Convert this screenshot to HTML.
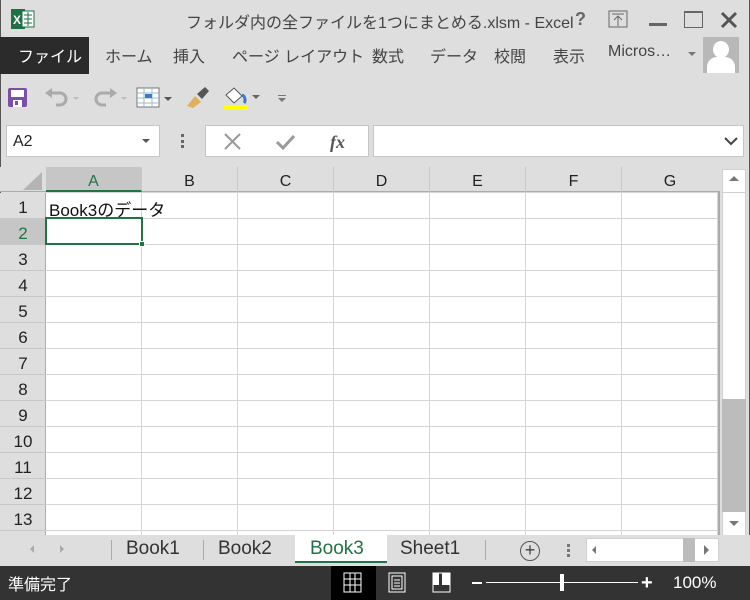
<!DOCTYPE html>
<html><head><meta charset="utf-8"><style>
*{margin:0;padding:0;box-sizing:border-box}
body{width:750px;height:600px;overflow:hidden;background:#dedede;font-family:"Liberation Sans","Noto Sans CJK JP",sans-serif;position:relative;color:#444}
.a{position:absolute}
.tab{position:absolute;top:43px;font-size:16px;color:#444}
.col{position:absolute;top:167px;height:25px;font-size:16px;color:#222;text-align:center;line-height:29px;border-right:1px solid #c8c8c8}
.rh{position:absolute;left:0;width:46px;height:26px;font-size:17px;text-align:center;color:#222;line-height:29px;border-bottom:1px solid #c8c8c8}
</style></head><body>
<div class="a" style="left:0;top:0;width:1px;height:566px;background:#555"></div>
<div class="a" style="right:0;top:0;width:1px;height:566px;background:#555"></div>
<svg class="a" style="left:11px;top:9px" width="25" height="20"><rect x="0" y="0" width="14" height="20" fill="#1e7145"/><rect x="11" y="2" width="12" height="16" fill="#fff" stroke="#1e7145"/><path d="M13 6h8M13 10h8M13 14h8M17 3v14" stroke="#1e7145"/><text x="2" y="15" font-size="12" font-weight="bold" fill="#fff" font-family="Liberation Sans">X</text></svg>
<div class="a" style="left:186px;top:9px;font-size:16px;color:#444">フォルダ内の全ファイルを1つにまとめる.xlsm - Excel</div>
<div class="a" style="left:575px;top:9px;font-size:18px;color:#666;font-weight:bold">?</div>
<svg class="a" style="left:608px;top:10px" width="20" height="18"><rect x="1" y="1" width="18" height="16" fill="none" stroke="#666"/><path d="M4 4h12M10 16V7M6 10l4-4 4 4" stroke="#666" fill="none"/></svg>
<div class="a" style="left:649px;top:23px;width:18px;height:3px;background:#666"></div>
<div class="a" style="left:684px;top:11px;width:19px;height:17px;border:1px solid #666;border-top-width:2px"></div>
<svg class="a" style="left:720px;top:11px" width="18" height="18"><path d="M2 2l14 14M16 2L2 16" stroke="#555" stroke-width="3"/></svg>
<div class="a" style="left:0;top:37px;width:89px;height:37px;background:#2b2b2b"></div>
<div class="tab" style="left:18px;color:#fff">ファイル</div>
<div class="tab" style="left:105px">ホーム</div>
<div class="tab" style="left:173px">挿入</div>
<div class="tab" style="left:232px">ページ レイアウト</div>
<div class="tab" style="left:372px">数式</div>
<div class="tab" style="left:430px">データ</div>
<div class="tab" style="left:494px">校閲</div>
<div class="tab" style="left:553px">表示</div>
<div class="tab" style="left:608px">Micros…</div>
<div class="a" style="left:688px;top:52px;border:4px solid transparent;border-top:4px solid #777"></div>
<div class="a" style="left:703px;top:37px;width:36px;height:36px;background:#b8b8b8;overflow:hidden"><div class="a" style="left:10px;top:4px;width:16px;height:17px;border-radius:50%;background:#fff"></div><div class="a" style="left:4px;top:20px;width:28px;height:20px;border-radius:10px 10px 0 0;background:#fff"></div></div>
<svg class="a" style="left:8px;top:88px" width="20" height="20"><rect x="0" y="0" width="19" height="19" rx="2" fill="#7b4fa8"/><rect x="3" y="2" width="13" height="7" fill="#fff"/><rect x="5" y="12" width="9" height="7" fill="#fff"/><rect x="7" y="13" width="3" height="4" fill="#7b4fa8"/></svg>
<svg class="a" style="left:44px;top:88px" width="35" height="20"><path d="M6 5h10a6 6 0 010 12h-4" stroke="#aaa" stroke-width="3" fill="none"/><path d="M1 5l7-5v10z" fill="#aaa"/><path d="M29 9l3 3 3-3z" fill="#bbb"/></svg>
<svg class="a" style="left:92px;top:88px" width="35" height="20"><path d="M20 5H10a6 6 0 000 12h4" stroke="#aaa" stroke-width="3" fill="none"/><path d="M25 5l-7-5v10z" fill="#aaa"/><path d="M29 9l3 3 3-3z" fill="#bbb"/></svg>
<svg class="a" style="left:136px;top:87px" width="36" height="22"><rect x="1" y="1" width="22" height="19" fill="#fff" stroke="#777"/><path d="M1 6h22M1 11h22M1 16h22M8 1v19M16 1v19" stroke="#9bc"/><rect x="9" y="7" width="7" height="4" fill="#3a7bc8"/><path d="M28 10l4 4 4-4z" fill="#555"/></svg>
<svg class="a" style="left:185px;top:86px" width="26" height="24"><path d="M2 20l8-10 6 6-8 6z" fill="#e0b060"/><path d="M12 8l8-7 4 4-7 8z" fill="#555"/></svg>
<svg class="a" style="left:222px;top:85px" width="40" height="26"><path d="M4 10l8-7 8 8-8 7z" fill="#fff" stroke="#555"/><path d="M20 10c3 1 4 6 2 8" stroke="#3a7bc8" stroke-width="3" fill="none"/><rect x="2" y="20" width="24" height="5" fill="#ffff00"/><path d="M30 10l4 4 4-4z" fill="#666"/></svg>
<div class="a" style="left:278px;top:95px;width:8px;height:1px;background:#777"></div>
<div class="a" style="left:278px;top:98px;border:4px solid transparent;border-top:4px solid #777"></div>
<div class="a" style="left:6px;top:125px;width:154px;height:32px;background:#fff;border:1px solid #c6c6c6;font-size:16px;color:#222;padding:7px 0 0 6px">A2</div>
<div class="a" style="left:142px;top:139px;border:4px solid transparent;border-top:4px solid #555"></div>
<div class="a" style="left:181px;top:134px;width:3px;height:14px;border-top:3px solid #666;border-bottom:3px solid #666"><div style="margin-top:2.5px;height:3px;background:#666"></div></div>
<div class="a" style="left:205px;top:125px;width:164px;height:32px;background:#fff;border:1px solid #c6c6c6"></div>
<svg class="a" style="left:222px;top:131px" width="130" height="22"><path d="M3 3l15 15M18 3L3 18" stroke="#999" stroke-width="2"/><path d="M55 11l6 6 11-12" stroke="#999" stroke-width="3" fill="none"/><text x="108" y="17" font-family="Liberation Serif" font-style="italic" font-weight="bold" font-size="18" fill="#555">fx</text></svg>
<div class="a" style="left:373px;top:125px;width:371px;height:32px;background:#fff;border:1px solid #c6c6c6"></div>
<svg class="a" style="left:724px;top:136px" width="14" height="10"><path d="M1 2l6 6 6-6" stroke="#444" stroke-width="2" fill="none"/></svg>
<div class="a" style="left:46px;top:192px;width:673px;height:343px;background:#fff;
background-image:linear-gradient(to right,transparent 95px,#d4d4d4 95px,#d4d4d4 96px,transparent 96px),linear-gradient(to bottom,transparent 25px,#d4d4d4 25px,#d4d4d4 26px,transparent 26px);
background-size:96px 26px;background-position:0 1px"></div>
<div class="a" style="left:718px;top:192px;width:2px;height:343px;background:#aaa"></div>
<div class="a" style="left:0;top:167px;width:720px;height:25px;background:#dedede;border-bottom:1px solid #ababab"></div>
<svg class="a" style="left:23px;top:172px" width="20" height="18"><path d="M19 0v18H0z" fill="#b4b4b4"/></svg>
<div class="col" style="left:46px;width:96px;background:#c6c6c6;color:#217346;border-bottom:2px solid #217346">A</div>
<div class="col" style="left:142px;width:96px">B</div>
<div class="col" style="left:238px;width:96px">C</div>
<div class="col" style="left:334px;width:96px">D</div>
<div class="col" style="left:430px;width:96px">E</div>
<div class="col" style="left:526px;width:96px">F</div>
<div class="col" style="left:622px;width:96px;border:none">G</div>
<div class="a" style="left:0;top:193px;width:46px;height:342px;background:#dedede;border-right:1px solid #ababab"></div>
<div class="rh" style="top:193px">1</div>
<div class="rh" style="top:219px;background:#c6c6c6;color:#217346">2</div>
<div class="rh" style="top:245px">3</div>
<div class="rh" style="top:271px">4</div>
<div class="rh" style="top:297px">5</div>
<div class="rh" style="top:323px">6</div>
<div class="rh" style="top:349px">7</div>
<div class="rh" style="top:375px">8</div>
<div class="rh" style="top:401px">9</div>
<div class="rh" style="top:427px">10</div>
<div class="rh" style="top:453px">11</div>
<div class="rh" style="top:479px">12</div>
<div class="rh" style="top:505px">13</div>
<div class="a" style="left:49px;top:196px;font-size:17px;color:#111">Book3のデータ</div>
<div class="a" style="left:45px;top:217px;width:98px;height:28px;border:2px solid #217346"></div>
<div class="a" style="left:139px;top:241px;width:6px;height:6px;background:#217346;border:1px solid #fff"></div>
<div class="a" style="left:722px;top:169px;width:24px;height:367px;background:#fff;border:1px solid #d0d0d0"></div>
<div class="a" style="left:722px;top:192px;width:24px;height:1px;background:#d0d0d0"></div>
<div class="a" style="left:729px;top:176px;border:5px solid transparent;border-bottom:5px solid #777;border-top:0"></div>
<div class="a" style="left:722px;top:399px;width:24px;height:113px;background:#bcbcbc"></div>
<div class="a" style="left:729px;top:521px;border:5px solid transparent;border-top:5px solid #777;border-bottom:0"></div>
<div class="a" style="left:0;top:535px;width:750px;height:31px;background:#dedede"></div>
<div class="a" style="left:30px;top:545px;border:4px solid transparent;border-right:4px solid #aaa;border-left:0;height:0"></div>
<div class="a" style="left:60px;top:545px;border:4px solid transparent;border-left:4px solid #aaa;border-right:0"></div>
<div class="a" style="left:111px;top:540px;width:1px;height:20px;background:#aaa"></div>
<div class="a" style="left:126px;top:538px;font-size:19px;color:#333">Book1</div>
<div class="a" style="left:203px;top:540px;width:1px;height:20px;background:#aaa"></div>
<div class="a" style="left:218px;top:538px;font-size:19px;color:#333">Book2</div>
<div class="a" style="left:295px;top:535px;width:92px;height:28px;background:#fff;border-bottom:2px solid #217346"></div>
<div class="a" style="left:310px;top:538px;font-size:19px;color:#217346">Book3</div>
<div class="a" style="left:400px;top:538px;font-size:19px;color:#333">Sheet1</div>
<div class="a" style="left:485px;top:540px;width:1px;height:20px;background:#aaa"></div>
<div class="a" style="left:520px;top:541px;width:20px;height:20px;border:1px solid #555;border-radius:50%;text-align:center;line-height:17px;font-size:18px;color:#444">+</div>
<div class="a" style="left:567px;top:544px;width:3px;height:3px;background:#777;box-shadow:0 5px #777,0 10px #777"></div>
<div class="a" style="left:586px;top:538px;width:133px;height:24px;background:#fff;border:1px solid #d0d0d0"></div>
<div class="a" style="left:592px;top:546px;border:4px solid transparent;border-right:4px solid #777;border-left:0"></div>
<div class="a" style="left:683px;top:538px;width:12px;height:24px;background:#bcbcbc"></div>
<div class="a" style="left:704px;top:545px;border:5px solid transparent;border-left:5px solid #777;border-right:0"></div>
<div class="a" style="left:0;top:566px;width:750px;height:34px;background:#333"></div>
<div class="a" style="left:8px;top:571px;font-size:16px;color:#fff">準備完了</div>
<div class="a" style="left:331px;top:566px;width:45px;height:34px;background:#000"></div>
<svg class="a" style="left:343px;top:572px" width="20" height="22"><rect x="1" y="1" width="17" height="19" fill="none" stroke="#fff"/><path d="M7 1v19M12 1v19M1 7h17M1 13h17" stroke="#fff"/></svg>
<svg class="a" style="left:388px;top:572px" width="20" height="22"><rect x="1" y="1" width="16" height="19" fill="none" stroke="#fff"/><rect x="4" y="4" width="10" height="13" fill="none" stroke="#fff"/><path d="M6 8h6M6 11h6M6 14h6" stroke="#fff"/></svg>
<svg class="a" style="left:432px;top:572px" width="20" height="22"><rect x="1" y="1" width="17" height="19" fill="none" stroke="#fff"/><rect x="1" y="1" width="6" height="12" fill="#fff"/><rect x="10" y="1" width="8" height="12" fill="#fff"/></svg>
<div class="a" style="left:472px;top:582px;width:10px;height:2px;background:#fff"></div>
<div class="a" style="left:486px;top:582px;width:152px;height:1px;background:#fff"></div>
<div class="a" style="left:560px;top:574px;width:4px;height:17px;background:#fff"></div>
<div class="a" style="left:641px;top:573px;font-size:20px;color:#fff;font-weight:bold;line-height:20px">+</div>
<div class="a" style="left:673px;top:573px;font-size:17px;color:#fff">100%</div>
</body></html>
